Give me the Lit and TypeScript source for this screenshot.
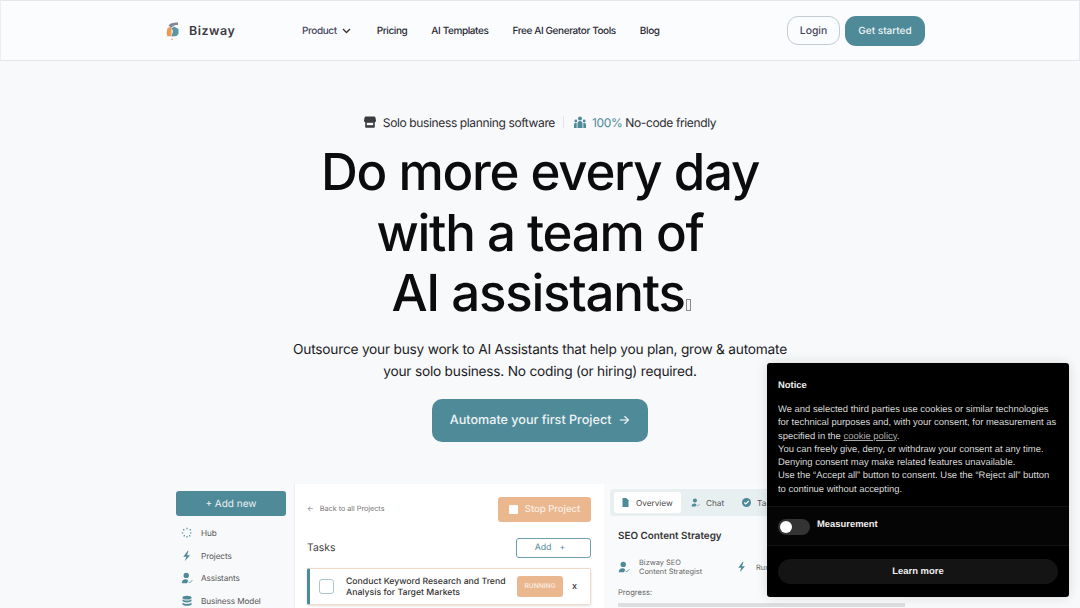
import { LitElement, html, css, svg } from "lit";
import { customElement } from "lit/decorators.js";

const teal = "#4f8a98";
const bolt = svg`<path d="M9 1 3 9h4l-2 6 7-8H8l2-6z"/>`;
const person = svg`<circle cx="7" cy="4.5" r="3.6"/><path d="M1 15c0-3.4 2.2-5.2 5-5.2 1.6 0 2.8.5 3.6 1.4L8 15z"/><path d="m10 13 1.5 1.5L15 11" fill="none" stroke="currentColor" stroke-width="1.2"/>`;

@customElement("app-root")
export class AppRoot extends LitElement {
  static styles = css`
    :host { display: block; width: 1080px; height: 608px; overflow: hidden; position: relative; background: #f8f9fb; font-family: "Inter", "Lato", sans-serif; color: #111; text-rendering: geometricPrecision; }
    svg { display: block; fill: currentColor; flex: none; }
    .nav { height: 59px; background: #fbfcfe; border: 1px solid #e6e7ea; border-left-color: #eceef0; display: flex; align-items: center; padding: 0 154px 0 165px; box-sizing: content-box; font-size: 10px; font-weight: 500; letter-spacing: -.4px; color: #2a2a33; }
    .logo { display: flex; align-items: center; gap: 10px; width: 136px; }
    .brand { font-size: 12.4px; font-weight: 600; letter-spacing: .55px; color: #3a3a40; }
    .links { display: flex; align-items: center; gap: 24px; flex: 1; }
    .product { display: flex; align-items: center; gap: 5px; margin-right: 2px; color: #44465c; }
    .login { width: 53px; height: 29px; box-sizing: border-box; border: 1px solid #c4ccd2; border-radius: 11px; display: flex; align-items: center; justify-content: center; color: #44465c; letter-spacing: 0; font-size: 10.4px; }
    .start { width: 80px; height: 30px; margin-left: 5px; border-radius: 11px; background: ${css([teal] as any)}; color: #eef4f6; display: flex; align-items: center; justify-content: center; letter-spacing: 0; }
    .hero { display: flex; flex-direction: column; align-items: center; }
    .tags { margin-top: 52px; height: 18px; display: flex; align-items: center; font-size: 12px; letter-spacing: -.37px; color: #2c2c30; }
    .tags svg { margin-right: 6px; }
    .tags svg.store { margin-right: 7px; }
    .sep { width: 1px; height: 12px; background: #e3e5e8; margin: 0 10px 0 8px; }
    .pct { color: ${css([teal] as any)}; margin-right: 3px; }
    h1 { margin: 0; font-weight: 500; font-size: 51px; line-height: 60.5px; letter-spacing: -1.25px; text-align: center; color: #0c0c0e; padding-top: 12px; }
    .tofu { display: inline-block; width: 3px; height: 10px; border: 1px solid #8b8b8b; margin: 0 -2px 0 1px; }
    .sub { margin: 14px 0 0; font-size: 13.7px; line-height: 22px; text-align: center; color: #1b1b1f; letter-spacing: -.22px; }
    .cta { margin-top: 16px; width: 216px; height: 43px; border-radius: 10px; background: ${css([teal] as any)}; color: #eef4f6; display: flex; align-items: center; justify-content: center; font-size: 12.6px; font-weight: 500; letter-spacing: 0; }
    .preview { position: absolute; left: 176px; top: 484px; width: 729px; height: 124px; display: grid; grid-template-columns: 118px 310px 301px; overflow: hidden; border-radius: 6px 6px 0 0; color: #333; }
    .side { background: #f8f9fb; padding-top: 7px; padding-right: 8px; }
    .add { height: 25px; border-radius: 3px; background: ${css([teal] as any)}; color: #eaf1f3; font-size: 10px; display: flex; align-items: center; justify-content: center; gap: 4px; }
    .menu { margin: 9px 0 0 5px; display: flex; flex-direction: column; gap: 6.7px; font-size: 8.2px; letter-spacing: -.1px; color: #555; }
    .mi { display: flex; align-items: center; gap: 8px; height: 16px; }
    .mi svg { color: ${css([teal] as any)}; width: 12px; height: 12px; }
    .mid { background: #fff; border-left: 1px solid #eceef0; padding: 12px 13px 0 12px; }
    .toprow { display: flex; justify-content: space-between; align-items: center; height: 26px; font-size: 7.2px; color: #777; }
    .back { display: flex; gap: 6px; align-items: center; margin-top: -2px; }
    .stop { width: 93px; height: 25px; background: #eab78f; border-radius: 3px; color: #fbeee3; font-size: 9.5px; font-weight: 500; display: flex; align-items: center; justify-content: center; gap: 7px; }
    .sq { width: 9px; height: 9px; background: #fff; border-radius: 1px; }
    .taskhead { display: flex; justify-content: space-between; align-items: center; margin-top: 15px; height: 21px; font-size: 10.4px; color: #444; }
    .addbtn { width: 75px; height: 20px; box-sizing: border-box; border: 1px solid #6f9fab; border-radius: 3px; display: flex; align-items: center; justify-content: center; gap: 8px; padding-right: 7px; font-size: 8.8px; color: ${css([teal] as any)}; }
    .task { margin-top: 10px; height: 37px; box-sizing: border-box; border: 1px solid #f0d9c6; border-left: 3px solid ${css([teal] as any)}; border-radius: 2px; box-shadow: 0 1px 3px #0002; display: flex; align-items: center; padding: 0 13px 0 9px; font-size: 8.7px; line-height: 11px; font-weight: 500; color: #333; }
    .check { width: 15px; height: 15px; box-sizing: border-box; border: 1px solid #a9c6cd; border-radius: 3px; margin-right: 12px; flex: none; }
    .tasktext { flex: 1; white-space: nowrap; padding-top: 2px; }
    .running { width: 46px; height: 21px; border-radius: 3px; background: #eab78f; color: #fbeee3; font-size: 6.6px; display: flex; align-items: center; justify-content: center; margin-right: 9px; }
    .x { font-size: 9px; color: #333; }
    .right { background: #f9fafb; padding: 5px 0 0 6px; }
    .tabs { height: 27px; background: #e8eff1; border-radius: 4px 0 0 4px; display: flex; align-items: center; padding-left: 4px; font-size: 8.2px; color: #555; gap: 10px; }
    .tab { display: flex; align-items: center; gap: 6px; height: 21px; }
    .tab + .tab + .tab { margin-left: 8px; }
    .tab svg { width: 9px; height: 9px; color: ${css([teal] as any)}; }
    .tab.on { background: #fff; border-radius: 3px; padding: 0 7px; width: 53px; color: #444; }
    .title { margin: 14px 0 0 8px; font-size: 9.9px; font-weight: 600; color: #333; }
    .meta { margin: 16px 0 0 8px; display: flex; align-items: center; font-size: 7.4px; line-height: 9px; color: #666; }
    .meta svg { color: ${css([teal] as any)}; width: 12px; height: 14px; }
    .prog { margin: 12px 0 0 8px; font-size: 7.6px; color: #666; }
    .bar { margin: 6px 0 0 8px; height: 4px; background: #dcdee0; }
    .cookie { position: absolute; left: 767px; top: 363px; width: 302px; height: 234px; box-sizing: border-box; background: #000; border-radius: 3px; box-shadow: 0 0 12px #0002; color: #d8d8d8; font-family: "Liberation Sans", Arial, sans-serif; font-size: 9.43px; line-height: 13.3px; }
    .c-title { font-weight: 700; color: #eee; padding: 15px 11px 0; height: 14px; }
    .c-text { padding: 10px 10px 0 11px; height: 114px; box-sizing: border-box; }
    .c-text a { color: #aaa; text-decoration: underline; }
    .c-row { border-top: 1px solid #131313; border-bottom: 1px solid #131313; height: 40px; box-sizing: border-box; display: flex; align-items: center; padding: 0 11px; gap: 7px; background: #050505; font-weight: 700; color: #eee; }
    .toggle { width: 32px; height: 16px; border-radius: 8px; background: #333; position: relative; margin-top: 2px; }
    .knob { position: absolute; left: 2px; top: 2px; width: 12px; height: 12px; border-radius: 50%; background: #fff; }
    .label { margin-top: -5px; }
    .c-btn { margin: 13px 11px 0; height: 25px; box-sizing: border-box; padding-bottom: 2px; border-radius: 12.5px; background: #141414; display: flex; align-items: center; justify-content: center; font-weight: 700; color: #eee; }
  `;

  render() {
    return html`
      <header class="nav">
        <div class="logo">
          <svg width="13" height="19" viewBox="0 0 13 19"><path d="M5.500 5.500 1.500 7 .5 12l1 3.500 4-.5z" fill="#ec9a52"/><path d="M5 8c2.500 0 2 3.500 1 5.500l-.5 2 5-.5 2-2V8L8 5.500z" fill="#5c96a5"/><path d="M2.500 5c.5-2.500 5-3.500 9.500-3.500V4C9 4 7 4.500 6 6.500z" fill="#7f8996"/><circle cx="6" cy="18.200" r=".8" fill="#ec9a52"/></svg>
          <span class="brand">Bizway</span>
        </div>
        <nav class="links">
          <span class="product">Product
            <svg width="9" height="6" viewBox="0 0 9 6"><path d="m1 1 3.500 3.500L8 1" fill="none" stroke="#333" stroke-width="1.300"/></svg>
          </span>
          <span>Pricing</span>
          <span>AI Templates</span>
          <span>Free AI Generator Tools</span>
          <span>Blog</span>
        </nav>
        <span class="login">Login</span>
        <span class="start">Get started</span>
      </header>
      <main class="hero">
        <div class="tags">
          <svg class="store" width="12" height="12" viewBox="0 0 12 12"><path d="M2 .5h8c.8 0 1.200.4 1.400 1L12 4.500c0 1-.7 1.700-1.200 1.800V11c0 .5-.3.800-.8.800H2c-.5 0-.8-.3-.8-.8V6.300C.7 6.200 0 5.500 0 4.500l.6-3c.2-.6.6-1 1.400-1z" fill="#3c3c40"/><rect x="2.800" y="6.800" width="6.400" height="2.400" fill="#f8f9fb"/></svg>
          <span>Solo business planning software</span>
          <i class="sep"></i>
          <svg width="12" height="12" viewBox="0 0 12 12" style="color:#4f8a98"><circle cx="6" cy="2.500" r="2"/><circle cx="1.800" cy="5" r="1.400"/><circle cx="10.200" cy="5" r="1.400"/><path d="M3.500 12V7.500C3.500 5.800 4.700 5 6 5s2.500.8 2.500 2.500V12zM0 12V8.500C0 7.300 1 6.800 2.700 7v5zM12 12V8.500c0-1.200-1-1.700-2.700-1.500v5z"/></svg>
          <span class="pct">100%</span><span>No-code friendly</span>
        </div>
        <h1>Do more every day<br />with a team of<br />AI assistants<span class="tofu"></span></h1>
        <p class="sub">Outsource your busy work to AI Assistants that help you plan, grow &amp; automate<br />your solo business. No coding (or hiring) required.</p>
        <div class="cta">Automate your first Project &nbsp;→</div>
      </main>
      <section class="preview">
        <aside class="side">
          <div class="add">+ Add new</div>
          <div class="menu">
            <div class="mi"><svg viewBox="0 0 16 16"><path d="M8 1v3M8 12v3M1 8h3M12 8h3M3 3l2 2M11 11l2 2M13 3l-2 2M5 11l-2 2" fill="none" stroke="currentColor" stroke-width="1.500" stroke-dasharray="2 1"/></svg>Hub</div>
            <div class="mi"><svg viewBox="0 0 16 16">${bolt}</svg>Projects</div>
            <div class="mi"><svg viewBox="0 0 16 16">${person}</svg>Assistants</div>
            <div class="mi"><svg viewBox="0 0 16 16"><ellipse cx="8" cy="3.500" rx="6" ry="2.500"/><path d="M2 5.500c1 2.500 11 2.500 12 0V8c-1 2.500-11 2.500-12 0zM2 10c1 2.500 11 2.500 12 0v2.500c-1 2.500-11 2.500-12 0z"/></svg>Business Model</div>
          </div>
        </aside>
        <div class="mid">
          <div class="toprow"><span class="back"><span>←</span>Back to all Projects</span><span class="stop"><i class="sq"></i>Stop Project</span></div>
          <div class="taskhead"><span>Tasks</span><span class="addbtn">Add <span>+</span></span></div>
          <div class="task"><i class="check"></i><span class="tasktext">Conduct Keyword Research and Trend<br />Analysis for Target Markets</span><span class="running">RUNNING</span><span class="x">x</span></div>
        </div>
        <div class="right">
          <div class="tabs">
            <span class="tab on"><svg viewBox="0 0 12 12"><path d="M2 0h5l3 3v9H2z"/></svg>Overview</span>
            <span class="tab"><svg viewBox="0 0 16 16">${person}</svg>Chat</span>
            <span class="tab"><svg viewBox="0 0 12 12"><circle cx="6" cy="6" r="6"/><path d="m3 6 2 2 4-4" fill="none" stroke="#fff" stroke-width="1.500"/></svg>Tasks</span>
          </div>
          <div class="title">SEO Content Strategy</div>
          <div class="meta"><svg viewBox="0 0 16 16">${person}</svg><span style="margin:0 34px 0 9px">Bizway SEO<br />Content Strategist</span><svg viewBox="0 0 16 16">${bolt}</svg><span style="margin-left:8px">Running</span></div>
          <div class="prog">Progress:</div>
          <div class="bar"></div>
        </div>
      </section>
      <aside class="cookie">
        <div class="c-title">Notice</div>
        <div class="c-text">We and selected third parties use cookies or similar technologies for technical purposes and, with your consent, for measurement as specified in the <a>cookie policy</a>.<br />You can freely give, deny, or withdraw your consent at any time.<br />Denying consent may make related features unavailable.<br />Use the “Accept all” button to consent. Use the “Reject all” button to continue without accepting.</div>
        <div class="c-row"><span class="toggle"><i class="knob"></i></span><span class="label">Measurement</span></div>
        <div class="c-btn">Learn more</div>
      </aside>
    `;
  }
}
